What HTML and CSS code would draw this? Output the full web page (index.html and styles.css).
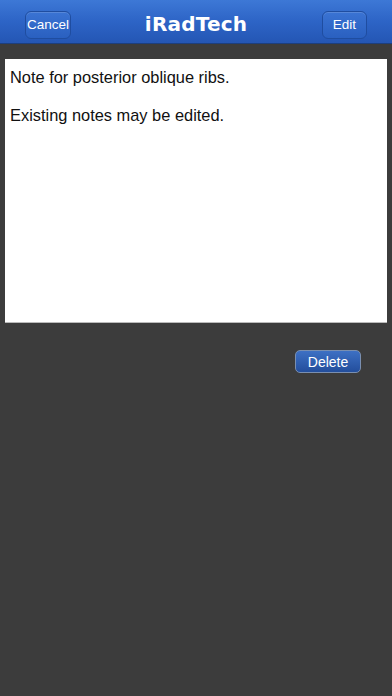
FILE: index.html
```html
<!DOCTYPE html>
<html>
<head>
<meta charset="utf-8">
<link rel="stylesheet" href="styles.css">
</head>
<body>
<header class="navbar">
  <div class="nav-left"><button class="nav-btn nav-cancel">Cancel</button></div>
  <h1 class="title">iRadTech</h1>
  <div class="nav-right"><button class="nav-btn nav-edit">Edit</button></div>
</header>
<main class="content">
  <div class="note">
    <p>Note for posterior oblique ribs.</p>
    <p>Existing notes may be edited.</p>
  </div>
  <div class="actions">
    <button class="delete-btn">Delete</button>
  </div>
</main>
</body>
</html>
```
FILE: styles.css
```css
html, body {
  margin: 0;
  padding: 0;
  height: 100%;
}
body {
  background: #3c3c3c;
  font-family: "Liberation Sans", Arial, sans-serif;
}
.navbar {
  height: 44px;
  box-sizing: border-box;
  display: grid;
  grid-template-columns: 1fr auto 1fr;
  align-items: center;
  padding: 0 25px 0 25px;
  background: linear-gradient(#3d78d6 0%, #2d64c6 50%, #2456b4 100%);
  border-bottom: 1px solid #1d3f7e;
}
.nav-left {
  display: flex;
  justify-content: flex-start;
}
.nav-right {
  display: flex;
  justify-content: flex-end;
}
.nav-btn {
  height: 28px;
  margin-top: 6px;
  padding: 0;
  border: 1px solid #1f4da0;
  border-radius: 6px;
  background: linear-gradient(#3a73d3, #2a60c0);
  box-shadow: inset 0 1px 0 rgba(255,255,255,0.15);
  color: #fff;
  font-family: "Liberation Sans", Arial, sans-serif;
  font-size: 13.5px;
}
.nav-cancel {
  width: 46px;
}
.nav-edit {
  width: 45px;
}
.title {
  margin: 5px 0 0 0;
  color: #fff;
  font-family: "DejaVu Sans", sans-serif;
  font-weight: bold;
  font-size: 20px;
  letter-spacing: 0.2px;
}
.content {
  padding: 15px 5px 0 5px;
}
.note {
  background: #fff;
  height: 264px;
  box-sizing: border-box;
  padding: 7px 5px;
  border-bottom: 1px solid #bbb;
}
.note p {
  margin: 0 0 15px 0;
  font-size: 16.4px;
  line-height: 23px;
  color: #111;
}
.actions {
  display: flex;
  justify-content: flex-end;
  padding: 27px 26px 0 0;
}
.delete-btn {
  height: 23px;
  width: 66px;
  padding: 0;
  border: 1px solid #7a8fb0;
  border-radius: 5px;
  background: linear-gradient(#3d70c4, #234e9c);
  color: #fff;
  font-family: "Liberation Sans", Arial, sans-serif;
  font-size: 14px;
}
```
